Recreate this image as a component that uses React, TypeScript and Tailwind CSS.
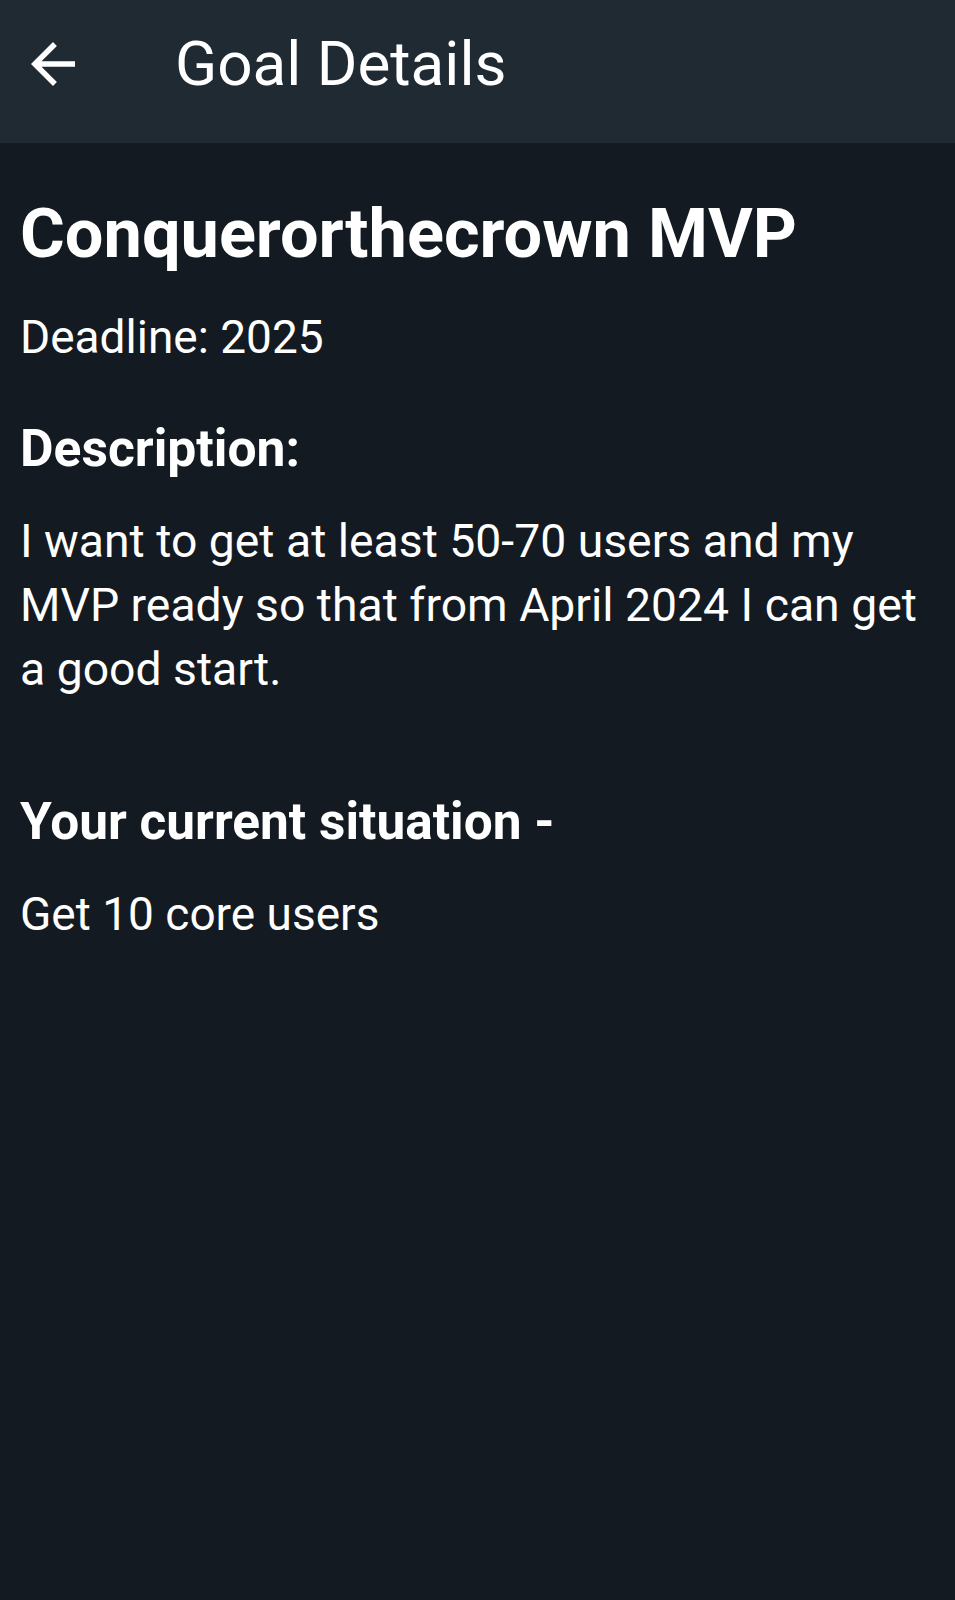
import React from "react";

const font = { fontFamily: "Roboto, 'Noto Sans', sans-serif" };

function BackArrow() {
  return (
    <svg viewBox="0 0 24 24" className="w-[66px] h-[66px] shrink-0 mt-[31px]" fill="#ffffff">
      <path d="M20 11H7.83l5.59-5.59L12 4l-8 8 8 8 1.41-1.41L7.83 13H20v-2z" />
    </svg>
  );
}

export default function App() {
  return (
    <div className="min-h-[1600px] bg-[#141a21] text-white" style={font}>
      {/* Top bar */}
      <div className="h-[143px] bg-[#202a33] flex items-start pl-5">
        <BackArrow />
        <h1 className="ml-[89px] pt-[28px] text-[62px] leading-[72px] font-normal">Goal Details</h1>
      </div>

      {/* Content */}
      <div className="px-5">
        <h2 className="mt-[50px] text-[68.5px] leading-[82px] font-bold">Conquerorthecrown MVP</h2>
        <p className="mt-[30px] text-[46px] leading-[64px]">Deadline: 2025</p>

        <h3 className="mt-[48px] text-[51.6px] leading-[64px] font-bold">Description:</h3>
        <p className="mt-[28px] text-[46.3px] leading-[64px]">
          I want to get at least 50-70 users and my MVP ready so that from April 2024 I can get a good start.
        </p>

        <h3 className="mt-[89px] text-[51.4px] leading-[64px] font-bold">Your current situation -</h3>
        <p className="mt-[28px] text-[46px] leading-[64px]">Get 10 core users</p>
      </div>
    </div>
  );
}
